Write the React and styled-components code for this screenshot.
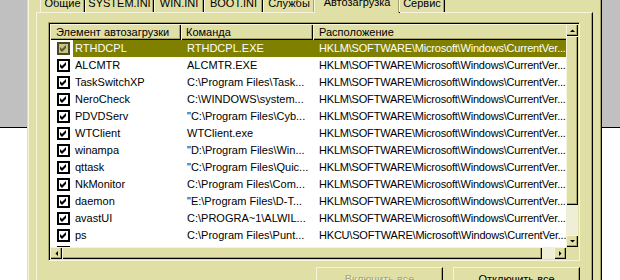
import React from "react";
import styled, { createGlobalStyle } from "styled-components";

const FACE = "#e0dfa6";
const LIGHT = "#f6f5dc";
const SHADOW = "#a5a46b";
const DARK = "#000";
const HILITE = "#808000";
const TRACK = "#efeed6";

const GlobalStyle = createGlobalStyle`
  html, body {
    margin: 0;
    padding: 0;
  }
  body {
    width: 620px;
    height: 280px;
    overflow: hidden;
    font-family: "Liberation Sans", Arial, sans-serif;
    font-size: 11px;
    color: #000;
  }
`;

const Page = styled.div`
  display: grid;
  grid-template-columns: 27px 575px 18px;
  height: 280px;
`;

const Backdrop = styled.div`
  background: linear-gradient(
    #c0c0c0 0 127px,
    #000 127px 128px,
    #fff 128px
  );
`;

const Window = styled.div`
  display: flex;
  flex-direction: column;
  background: ${FACE};
  border-left: 1px solid ${FACE};
  border-right: 1px solid ${DARK};
  box-shadow: inset 1px 0 ${LIGHT}, inset -1px 0 ${SHADOW};
  padding: 0 8px 0 8px;
`;

const TabStrip = styled.div`
  display: flex;
  align-items: flex-end;
  height: 12px;
  padding-left: 4px;
  position: relative;
  z-index: 1;
`;

const Tab = styled.div`
  flex: none;
  width: ${(p) => p.$w}px;
  height: ${(p) => (p.$active ? 21 : 18)}px;
  margin-bottom: ${(p) => (p.$active ? -1 : 0)}px;
  margin-left: ${(p) => (p.$active ? -1 : 0)}px;
  margin-right: ${(p) => (p.$active ? -1 : 0)}px;
  display: flex;
  align-items: flex-end;
  justify-content: center;
  padding-bottom: ${(p) => (p.$active ? 4 : 2)}px;
  box-sizing: border-box;
  background: ${FACE};
  border-top: 1px solid ${LIGHT};
  border-left: 1px solid ${LIGHT};
  border-right: 1px solid ${DARK};
  box-shadow: inset -1px 0 ${SHADOW};
  border-radius: 2px 2px 0 0;
  line-height: 13px;
  white-space: nowrap;
`;

const Panel = styled.div`
  flex: 1;
  display: flex;
  flex-direction: column;
  border-top: 1px solid ${LIGHT};
  border-left: 1px solid ${LIGHT};
  border-right: 1px solid ${DARK};
  box-shadow: inset -1px 0 ${SHADOW};
  padding: 9px 12px 0 11px;
`;

const ListView = styled.div`
  height: 239px;
  box-sizing: border-box;
  border-top: 1px solid ${SHADOW};
  border-left: 1px solid ${SHADOW};
  border-bottom: 1px solid ${LIGHT};
  border-right: 1px solid ${LIGHT};
  box-shadow: inset 1px 1px ${DARK}, inset -1px -1px ${FACE};
  padding: 1px;
  display: grid;
  grid-template-columns: 1fr 12px;
  grid-template-rows: 1fr 12px;
`;

const Content = styled.div`
  background: #fff;
  overflow: hidden;
`;

const HeaderRow = styled.div`
  display: flex;
  height: 16px;
`;

const HeaderCell = styled.div`
  flex: none;
  width: ${(p) => p.$w}px;
  box-sizing: border-box;
  background: ${FACE};
  box-shadow: inset 1px 1px ${LIGHT}, inset -1px -1px ${DARK},
    inset -2px -2px ${SHADOW};
  padding-left: ${(p) => p.$pad}px;
  line-height: 16px;
  white-space: nowrap;
`;

const Row = styled.div`
  display: flex;
  align-items: stretch;
  height: 17px;
`;

const CheckCell = styled.div`
  flex: none;
  width: 23px;
  padding-left: 7px;
  box-sizing: border-box;
  display: flex;
  align-items: center;
`;

const RowBody = styled.div`
  flex: none;
  display: flex;
  background: ${(p) => (p.$selected ? HILITE : "transparent")};
  color: ${(p) => (p.$selected ? "#fff" : "#000")};
`;

const Cell = styled.div`
  flex: none;
  width: ${(p) => p.$w}px;
  padding-left: ${(p) => p.$pad}px;
  box-sizing: border-box;
  line-height: 17px;
  white-space: nowrap;
  overflow: hidden;
  letter-spacing: ${(p) => (p.$tight ? "-0.2px" : "normal")};
`;

const VScroll = styled.div`
  display: flex;
  flex-direction: column;
  background: ${TRACK};
`;

const HScroll = styled.div`
  display: flex;
  background: ${TRACK};
`;

const Track = styled.div`
  flex: 1;
`;

const Corner = styled.div`
  background: ${FACE};
`;

const raised = `
  background: ${FACE};
  box-shadow: inset 1px 1px ${LIGHT}, inset -1px -1px ${DARK},
    inset -2px -2px ${SHADOW};
`;

const ScrollButton = styled.div`
  flex: none;
  width: 12px;
  height: 12px;
  display: flex;
  align-items: center;
  justify-content: center;
  ${raised}
`;

const Thumb = styled.div`
  flex: none;
  ${(p) => (p.$vertical ? `height: ${p.$size}px;` : `width: ${p.$size}px;`)}
  ${raised}
`;

const ButtonRow = styled.div`
  display: flex;
  justify-content: flex-end;
  gap: 10px;
  margin-top: 6px;
`;

const Button = styled.div`
  width: 127px;
  height: 23px;
  box-sizing: border-box;
  display: flex;
  align-items: center;
  justify-content: center;
  background: ${FACE};
  border-top: 1px solid ${LIGHT};
  border-left: 1px solid ${LIGHT};
  border-right: 1px solid ${DARK};
  border-bottom: 1px solid ${DARK};
  box-shadow: inset -1px -1px ${SHADOW};
  color: ${(p) => (p.$disabled ? SHADOW : "#000")};
  text-shadow: ${(p) => (p.$disabled ? `1px 1px ${LIGHT}` : "none")};
`;

const Arrow = ({ dir }) => {
  const pts = {
    up: "0,3 5,3 2.5,0.5",
    down: "0,0 5,0 2.5,2.5",
    left: "3,0 3,5 0.5,2.5",
    right: "0,0 0,5 2.5,2.5",
  }[dir];
  const vert = dir === "up" || dir === "down";
  return (
    <svg width={vert ? 5 : 3} height={vert ? 3 : 5} viewBox={vert ? "0 0 5 3" : "0 0 3 5"}>
      <polygon points={pts} fill="#000" />
    </svg>
  );
};

const CheckBox = ({ selected }) => (
  <svg width="13" height="13" viewBox="0 0 13 13">
    <rect x="0" y="0" width="13" height="13" fill={selected ? "#4a4a1e" : "#000"} />
    <rect x="2" y="2" width="9" height="9" fill={selected ? "#c4c38a" : "#fff"} />
    <polygon
      points="3,5 5,7 9,3 9,6 5,10 3,8"
      fill={selected ? "#5c5b28" : "#000"}
    />
  </svg>
);

const tabs = [
  ["Общие", 45],
  ["SYSTEM.INI", 69],
  ["WIN.INI", 50],
  ["BOOT.INI", 59],
  ["Службы", 52],
  ["Автозагрузка", 86, true],
  ["Сервис", 46],
];

const HKLM = "HKLM\\SOFTWARE\\Microsoft\\Windows\\CurrentVer...";

const items = [
  ["RTHDCPL", "RTHDCPL.EXE", HKLM],
  ["ALCMTR", "ALCMTR.EXE", HKLM],
  ["TaskSwitchXP", "C:\\Program Files\\Task...", HKLM],
  ["NeroCheck", "C:\\WINDOWS\\system...", HKLM],
  ["PDVDServ", "\"C:\\Program Files\\Cyb...", HKLM],
  ["WTClient", "WTClient.exe", HKLM],
  ["winampa", "\"D:\\Program Files\\Win...", HKLM],
  ["qttask", "\"C:\\Program Files\\Quic...", HKLM],
  ["NkMonitor", "C:\\Program Files\\Com...", HKLM],
  ["daemon", "\"E:\\Program Files\\D-T...", HKLM],
  ["avastUI", "C:\\PROGRA~1\\ALWIL...", HKLM],
  ["ps", "C:\\Program Files\\Punt...", "HKCU\\SOFTWARE\\Microsoft\\Windows\\CurrentVer..."],
  ["SoundMAX", "C:\\Program Files\\Anal...", HKLM],
];

export default function App() {
  return (
    <>
      <GlobalStyle />
      <Page>
        <Backdrop />
        <Window>
          <TabStrip>
            {tabs.map(([label, w, active]) => (
              <Tab key={label} $w={w} $active={active}>
                {label}
              </Tab>
            ))}
          </TabStrip>
          <Panel>
            <ListView>
              <Content>
                <HeaderRow>
                  <HeaderCell $w={131} $pad={6}>Элемент автозагрузки</HeaderCell>
                  <HeaderCell $w={132} $pad={5}>Команда</HeaderCell>
                  <HeaderCell $w={300} $pad={6}>Расположение</HeaderCell>
                </HeaderRow>
                {items.map(([name, cmd, loc], i) => (
                  <Row key={name}>
                    <CheckCell>
                      <CheckBox selected={i === 0} />
                    </CheckCell>
                    <RowBody $selected={i === 0}>
                      <Cell $w={108} $pad={2}>{name}</Cell>
                      <Cell $w={132} $pad={6}>{cmd}</Cell>
                      <Cell $w={300} $pad={6} $tight>{loc}</Cell>
                    </RowBody>
                  </Row>
                ))}
              </Content>
              <VScroll>
                <ScrollButton><Arrow dir="up" /></ScrollButton>
                <Thumb $vertical $size={169} />
                <Track />
                <ScrollButton><Arrow dir="down" /></ScrollButton>
              </VScroll>
              <HScroll>
                <ScrollButton><Arrow dir="left" /></ScrollButton>
                <Thumb $size={480} />
                <Track />
                <ScrollButton><Arrow dir="right" /></ScrollButton>
              </HScroll>
              <Corner />
            </ListView>
            <ButtonRow>
              <Button $disabled>Включить все</Button>
              <Button>Отключить все</Button>
            </ButtonRow>
          </Panel>
        </Window>
        <Backdrop />
      </Page>
    </>
  );
}
